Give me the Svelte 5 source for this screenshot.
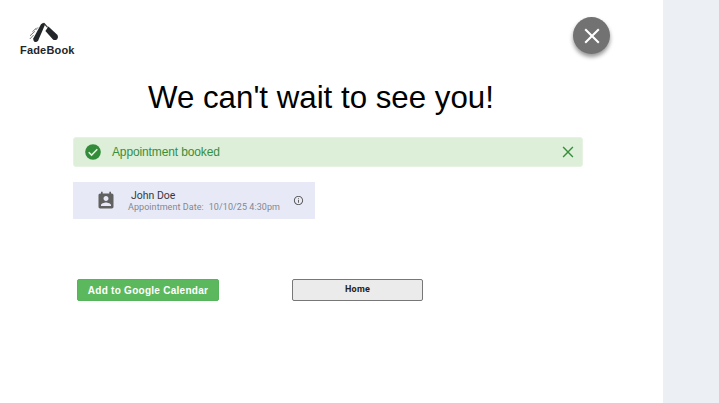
<script>
  const appointment = { name: 'John Doe', date: '10/10/25 4:30pm' };
</script>

<div class="screen">
  <main>
    <header>
      <div class="brand">
        <svg class="razor" width="34" height="21" viewBox="0 0 34 21">
          <path d="M14.3 .8 16.1 2.6 9.2 18.4Q7.6 20.8 5.4 19.8 3.6 18.8 4.4 16.2L12 2.2Z" fill="#222629" />
          <path d="M14.8 1.2 18.6 5.4" stroke="#333" stroke-width="1.2" fill="none" />
          <path d="M19.4 4.5 28.5 13.1Q29.8 15.3 28.2 17.2 26.2 18.7 24.2 17.7L16.4 8.9Z" fill="#222629" />
          <path d="M7.2 6.2 3.4 9.8M5.9 9.3 1 13.8M4.6 13 .8 17M9 5.4 6.6 8" stroke="#555" stroke-width=".8" fill="none" />
        </svg>
        <span>FadeBook</span>
      </div>
      <button class="close" aria-label="Close">
        <svg width="16" height="16" viewBox="0 0 16 16"><path d="M1.2 1.2 14.8 14.8M14.8 1.2 1.2 14.8" stroke="#fff" stroke-width="2.1" /></svg>
      </button>
    </header>

    <h1>We can't wait to see you!</h1>

    <div class="alert">
      <svg width="16" height="16" viewBox="0 0 16 16">
        <circle cx="8" cy="8" r="7.8" fill="#338c3a" />
        <path d="M3.7 8.2 6.6 11.1 12.3 5.3" stroke="#e3f3df" stroke-width="1.5" fill="none" />
      </svg>
      <span>Appointment booked</span>
      <svg class="dismiss" width="12" height="12" viewBox="0 0 12 12"><path d="M1.1 1.1 10.9 10.9M10.9 1.1 1.1 10.9" stroke="#388e3c" stroke-width="1.4" /></svg>
    </div>

    <section class="card">
      <svg class="contact" width="20" height="20" viewBox="0 0 24 24">
        <path fill="#616161" d="M19 3h-1V1h-2v2H8V1H6v2H5c-1.11 0-2 .9-2 2v14c0 1.1.89 2 2 2h14c1.1 0 2-.9 2-2V5c0-1.1-.9-2-2-2zm-7 3c1.66 0 3 1.34 3 3s-1.34 3-3 3-3-1.34-3-3 1.34-3 3-3zm6 12H6v-1c0-2 4-3.1 6-3.1s6 1.1 6 3.1v1z" />
      </svg>
      <div class="details">
        <div class="name">{appointment.name}</div>
        <div class="date"><span>Appointment Date:</span><span>{appointment.date}</span></div>
      </div>
      <svg class="info" width="11" height="11" viewBox="0 0 24 24">
        <path fill="#555" d="M11 7h2v2h-2zm0 4h2v6h-2zm1-9C6.48 2 2 6.48 2 12s4.48 10 10 10 10-4.48 10-10S17.52 2 12 2zm0 18c-4.41 0-8-3.59-8-8s3.59-8 8-8 8 3.59 8 8-3.59 8-8 8z" />
      </svg>
    </section>

    <div class="actions">
      <button class="google"><span>Add to Google Calendar</span></button>
      <button class="home"><span>Home</span></button>
    </div>
  </main>
</div>

<style>
  .screen { height: 403px; background: #ecf0f5; overflow: hidden; font-family: "Liberation Sans", Arial, sans-serif; }
  main { width: 663px; height: 403px; background: #fff; box-sizing: border-box; }
  button { margin: 0; padding: 0; font: inherit; box-sizing: border-box; }
  svg { display: block; flex: none; }
  header { height: 72px; display: flex; justify-content: space-between; align-items: flex-start; padding: 17px 53px 0 20px; box-sizing: border-box; }
  .brand { padding-top: 5px; color: #222629; font: bold 11px/14px "Liberation Sans", Arial, sans-serif; }
  .razor { margin-left: 9px; }
  .brand span { display: block; letter-spacing: .18px; white-space: nowrap; }
  .close { width: 37px; height: 37px; border: 0; border-radius: 50%; background: #727272; display: grid; place-items: center; box-shadow: 0 3px 4px rgba(0,0,0,.42); }
  h1 { margin: 6px 0 0 148px; height: 59px; font-size: 31.25px; line-height: 40px; font-weight: 400; color: #000; white-space: nowrap; }
  .alert { width: 510px; height: 30px; margin-left: 73px; padding: 0 8px 0 11px; box-sizing: border-box; border: 1px solid #e6f3e2; border-radius: 3px; background: #ddefd8; display: flex; align-items: center; color: #388e3c; font-size: 12px; }
  .alert span { margin-left: 11px; letter-spacing: -.13px; }
  .dismiss { margin-left: auto; }
  .card { width: 242px; height: 37px; margin: 15px 0 0 73px; background: #e7eaf6; display: flex; align-items: center; padding: 0 11px 0 23px; box-sizing: border-box; font-family: Roboto, sans-serif; }
  .details { margin-left: 12px; white-space: nowrap; }
  .name { font-size: 10.5px; line-height: 12px; padding-left: 3px; color: #37373f; }
  .date { display: flex; gap: 5px; font-size: 9px; line-height: 10px; letter-spacing: .06px; color: #85868f; }
  .info { margin-left: auto; }
  .actions { display: flex; gap: 73px; padding: 60px 0 0 77px; }
  .actions button { height: 22px; display: grid; place-items: center; border-radius: 2px; font-weight: bold; white-space: nowrap; }
  .google { width: 142px; border: 1px solid #55b45c; background: #5cb85c; color: #fff; font-size: 10px; letter-spacing: .27px; }
  .actions .home { width: 131px; padding-bottom: 2px; border: 1px solid #777; background: #ebebeb; color: #222; font-family: Roboto, sans-serif; font-size: 9px; letter-spacing: .25px; }
</style>
